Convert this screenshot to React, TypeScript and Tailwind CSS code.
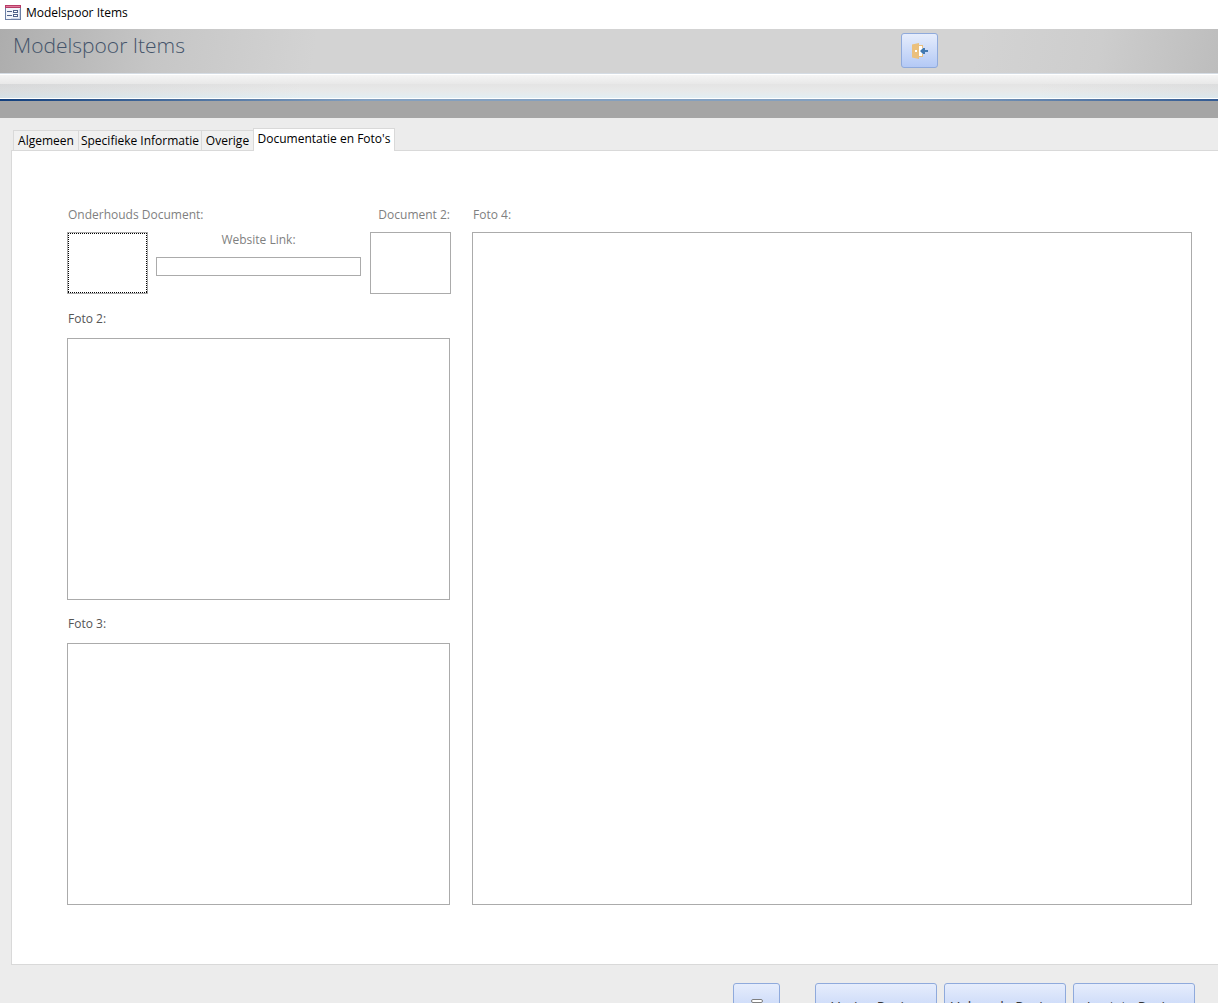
import React from "react";

const TABS = [
  { label: "Algemeen", width: "w-[65px]" },
  { label: "Specifieke Informatie", width: "w-[123px]" },
  { label: "Overige", width: "w-[52px]" },
];
const NAV = ["Vorige Pagina", "Volgende Pagina", "Laatste Pagina"];

const BUTTON =
  "flex items-center justify-center rounded-[3px] border border-[#8faadc] bg-linear-to-b from-[#e6edfc] to-[#b4c9f5]";

function FormIcon() {
  return (
    <svg width="16" height="15" viewBox="0 0 16 15" shapeRendering="crispEdges" aria-hidden="true">
      <rect width="16" height="15" fill="#6b7fa5" />
      <rect x="0" y="0" width="16" height="3" fill="#b73b66" />
      <rect x="1" y="1" width="14" height="1" fill="#df7a9c" />
      <rect x="1" y="3" width="14" height="11" fill="#f1f4fa" />
      <path d="M14 4h1v10H6v-1h8z" fill="#cbd6e9" />
      <path d="M2 6h5v1H2zM2 10h5v1H2zM8 5h5v3H8zM8 9h5v3H8z" fill="#4e628a" />
      <path d="M9 6h3v1H9zM9 10h3v1H9z" fill="#fff" />
    </svg>
  );
}

function DoorIcon() {
  return (
    <svg width="16" height="16" viewBox="0 0 16 16" aria-hidden="true">
      <path d="M6 2h5v12H6z" fill="#ebc07d" />
      <path d="M7 3h3v10H7z" fill="#fff" />
      <path d="M10 5h1v6h-1z" fill="#fff" />
      <path d="M0 1.500L7 0v16l-7-1.500z" fill="#ebc07d" />
      <rect x="3" y="7" width="2" height="2" fill="#fff" />
      <path d="M8 8l3-3h2v2h3v2h-3v2h-2z" fill="#4379b0" />
    </svg>
  );
}

function RecordIcon() {
  return (
    <svg width="12" height="16" viewBox="0 0 12 16" fill="#fff" stroke="#7f7f7f" aria-hidden="true">
      <path d="M1.500 4v9c0 1 2 2 4.500 2s4.500-1 4.500-2V4" />
      <rect x="0.500" y="0.500" width="11" height="3" rx="1.500" />
    </svg>
  );
}

function Photo({ id, label }: { id: string; label: string }) {
  return (
    <section aria-labelledby={id}>
      <h2 id={id} className="h-[27px] pl-px text-[#555]">{label}</h2>
      <div className="h-[262px] border border-[#ababab]" />
    </section>
  );
}

export default function App() {
  return (
    <div className="flex h-screen flex-col overflow-hidden bg-[#ececec] font-['Open_Sans','Noto_Sans',sans-serif] text-[12px] leading-4 text-black *:shrink-0">
      <div className="flex h-[29px] items-center gap-[5px] bg-white px-[5px] pb-1">
        <FormIcon />
        <span>Modelspoor Items</span>
      </div>

      <header>
        <div className="flex h-11 items-start justify-between bg-[linear-gradient(100deg,#adadad_0%,#c6c6c6_13%,#d3d3d3_26%,#d3d3d3_80%,#cdcdcd_90%,#bdbdbd_100%)] pt-1 pr-[280px] pl-[13px]">
          <h1 className="text-[21px] leading-6 font-light text-[#44546a]">Modelspoor Items</h1>
          <button type="button" aria-label="Sluiten" className={`${BUTTON} h-[35px] w-[37px]`}>
            <DoorIcon />
          </button>
        </div>
        <div className="h-px bg-[#d5dce4]" />
        <div className="h-[10px] border-t border-white bg-linear-to-b from-[#f5f5f5] to-[#e8e8e8]" />
        <div className="h-[14px] bg-[linear-gradient(90deg,rgb(120_130_140/0.12),transparent_25%,transparent_85%,rgb(120_130_140/0.07)),linear-gradient(180deg,#e4e4e4,#e8e9e9_50%,#e2eef3)]" />
        <div className="h-px bg-white" />
        <div className="h-[2px] bg-[linear-gradient(90deg,#123f7d,#83a0c0_30%,#83a0c0_75%,#345b92)]" />
        <div className="h-[17px] bg-[#a5a5a5]" />
      </header>

      <div role="tablist" className="relative z-10 -mb-px flex items-end pt-[10px] pl-[13px]">
        {TABS.map((tab) => (
          <button
            key={tab.label}
            type="button"
            role="tab"
            aria-selected="false"
            className={`${tab.width} mb-px h-5 border-t border-l border-[#d9d9d9] bg-[#f0f0f0] text-center whitespace-nowrap`}
          >
            {tab.label}
          </button>
        ))}
        <button
          type="button"
          role="tab"
          aria-selected="true"
          className="h-[23px] w-[142px] border border-b-0 border-[#d9d9d9] bg-white pb-[2px] text-center whitespace-nowrap"
        >
          Documentatie en Foto's
        </button>
      </div>

      <main className="ml-[11px] flex gap-[21px] border-y border-l border-[#d9d9d9] bg-white pt-14 pr-[26px] pb-[59px] pl-[55px]">
        <div className="flex w-[384px] shrink-0 flex-col">
          <div className="flex justify-between px-px text-[#7f7f7f]">
            <span id="doc1">Onderhouds Document:</span>
            <span id="doc2">Document 2:</span>
          </div>
          <div className="mt-[9px] flex">
            <button type="button" aria-labelledby="doc1" className="h-[62px] w-[81px] border border-[#ababab]">
              <svg width="79" height="60" fill="none" stroke="#000" aria-hidden="true">
                <path d="M0 0.500h79M0 59.500h79M0.500 0v60M78.500 0v60" strokeDasharray="1 1" shapeRendering="crispEdges" />
              </svg>
            </button>
            <div className="mr-[9px] ml-2 flex flex-1 flex-col gap-[9px] text-center text-[#7f7f7f]">
              <label htmlFor="link">Website Link:</label>
              <input id="link" type="text" className="h-[19px] w-full border border-[#ababab] px-1 text-black outline-none" />
            </div>
            <button type="button" aria-labelledby="doc2" className="h-[62px] w-[81px] border border-[#ababab]" />
          </div>
          <div className="mt-[17px] mr-px flex flex-col gap-4">
            <Photo id="foto2" label="Foto 2:" />
            <Photo id="foto3" label="Foto 3:" />
          </div>
        </div>
        <section aria-labelledby="foto4" className="flex flex-1 flex-col">
          <h2 id="foto4" className="pl-px text-[#7f7f7f]">Foto 4:</h2>
          <div className="mt-[9px] flex-1 border border-[#ababab]" />
        </section>
      </main>

      <footer className="flex items-start justify-end gap-[7px] pt-[18px] pr-[23px]">
        <button type="button" aria-label="Record" className={`${BUTTON} mr-[28px] h-[47px] w-[47px]`}>
          <RecordIcon />
        </button>
        {NAV.map((label) => (
          <button key={label} type="button" className={`${BUTTON} h-[47px] w-[122px] text-[14px] text-[#333]`}>
            {label}
          </button>
        ))}
      </footer>
    </div>
  );
}
